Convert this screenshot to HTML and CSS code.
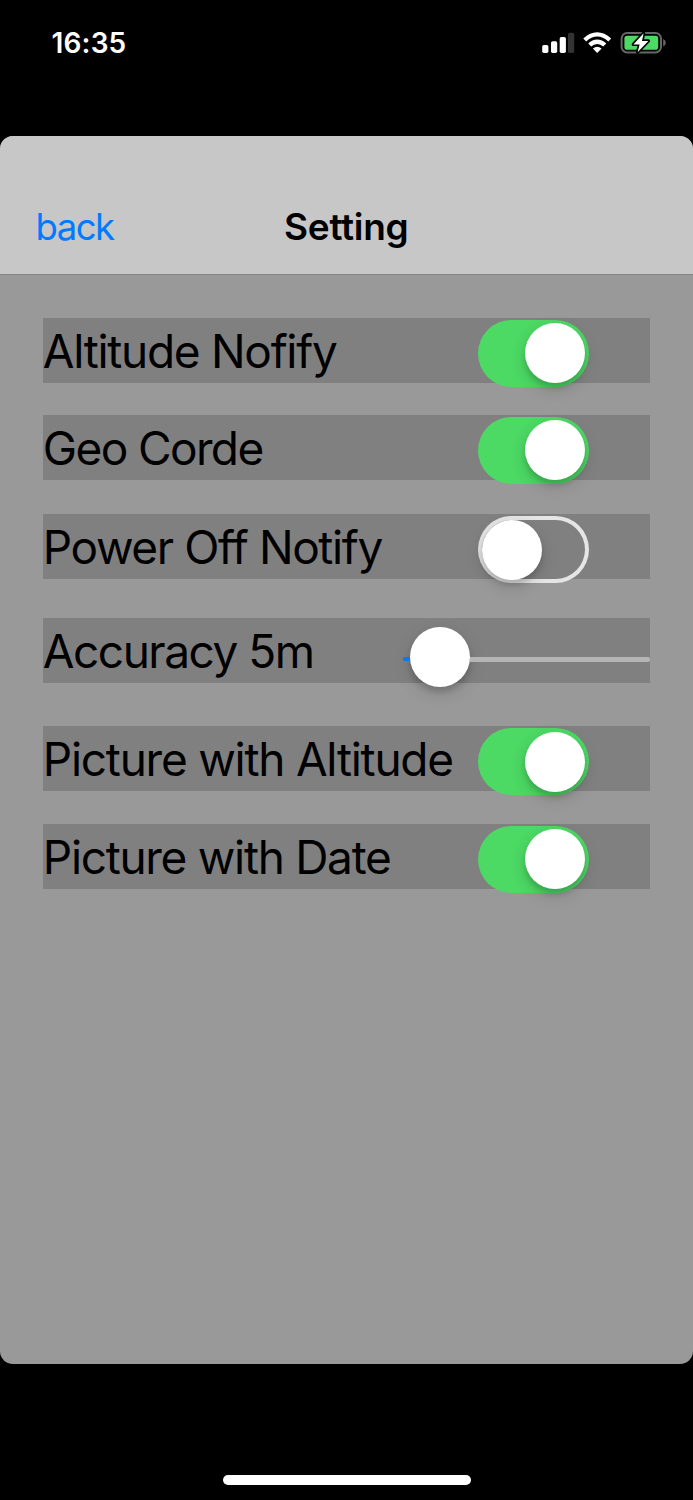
FILE: index.html
```html
<!DOCTYPE html>
<html lang="en">
<head>
<meta charset="utf-8">
<title>Setting</title>
<link rel="stylesheet" href="styles.css">
</head>
<body>
<div class="screen">
  <header class="status">
    <span class="time">16:35</span>
    <svg class="indicators" width="128" height="28" viewBox="540 29 128 28" aria-hidden="true">
      <g fill="#fff">
        <rect x="542.2" y="45" width="6.2" height="8" rx="1.7"/>
        <rect x="551" y="41.2" width="6.2" height="11.8" rx="1.7"/>
        <rect x="559.7" y="37" width="6.2" height="16" rx="1.7"/>
        <rect x="568" y="32.8" width="6.2" height="20.2" rx="1.7" fill="#333"/>
      </g>
      <path d="M583.3 38.5Q590 32.2 597.2 32.2T611.2 38.5L608.3 41.5Q603 36.5 597.2 36.5T586.2 41.5ZM588.2 43.6Q592.2 39.6 597.2 39.6T606.3 43.6L603.2 46.6Q600.5 44 597.2 44T591.2 46.6ZM592.9 48.4Q597.2 44.9 601.6 48.4L597.2 53Z" fill="#fff"/>
      <rect x="621.6" y="33" width="39.4" height="19.4" rx="5.5" fill="none" stroke="#666" stroke-width="2"/>
      <path d="M663.2 39Q665.8 40 665.8 42.7T663.2 46.4Z" fill="#666"/>
      <rect x="624.4" y="35.7" width="33.8" height="14" rx="2.8" fill="#4cd964"/>
      <path d="M643.6 33.3L633.4 44.4H639.6L637.6 52.2L648.4 40.9H642Z" fill="#fff" stroke="#000" stroke-width="3.4" stroke-linejoin="round" paint-order="stroke"/>
    </svg>
  </header>
  <main class="sheet">
    <nav class="navbar">
      <a class="back">back</a>
      <h1 class="title">Setting</h1>
    </nav>
    <section class="settings">
      <div class="row"><span class="label altitude">Altitude Nofify</span><span class="switch on"><i class="knob"></i></span></div>
      <div class="row geo-row"><span class="label geo">Geo Corde</span><span class="switch on"><i class="knob"></i></span></div>
      <div class="row power-row"><span class="label power">Power Off Notify</span><span class="switch"><i class="knob"></i></span></div>
      <div class="row accuracy-row"><span class="label accuracy">Accuracy 5m</span><span class="slider"><i class="fill"></i><i class="knob"></i><i class="track"></i></span></div>
      <div class="row picture-row"><span class="label picture">Picture with Altitude</span><span class="switch on"><i class="knob"></i></span></div>
      <div class="row date-row"><span class="label date">Picture with Date</span><span class="switch on"><i class="knob"></i></span></div>
    </section>
  </main>
  <footer class="home"><span class="home-bar"></span></footer>
</div>
</body>
</html>
```
FILE: styles.css
```css
* { box-sizing: border-box; }
body { margin: 0; background: #000; color: #000; font-family: Inter, Roboto, sans-serif; }
.screen { width: 693px; height: 1500px; display: flex; flex-direction: column; background: #000; }
.status { height: 135.5px; padding: 29px 25px 0 51.5px; display: flex; justify-content: space-between; align-items: flex-start; }
.time { color: #fff; font-size: 28px; font-weight: 600; line-height: 28px; letter-spacing: .15px; }
.indicators { display: block; }
.sheet { height: 1228.9px; border-radius: 13px; background: #999; overflow: hidden; }
.navbar { height: 139px; padding: 67px 36px 0 35.5px; display: grid; grid-template-columns: 1fr auto 1fr; align-items: start; background: #c7c7c7; border-bottom: 1px solid #858585; }
.back { color: #007aff; font-size: 36.5px; line-height: 48px; letter-spacing: -1.5px; }
.title { margin: 0; font-size: 37px; font-weight: 600; line-height: 48px; letter-spacing: -.3px; }
.settings { padding: 43.1px 43.2px 0; }
.row { height: 65px; display: flex; justify-content: space-between; align-items: flex-start; background: #808080; }
.geo-row { margin-top: 32.1px; }
.power-row { margin-top: 34.8px; }
.accuracy-row { margin-top: 39px; }
.picture-row { margin-top: 43px; }
.date-row { margin-top: 32.3px; }
.label { margin-left: -.4px; font-size: 46px; line-height: 67px; white-space: nowrap; }
.altitude { letter-spacing: -1.3px; }
.geo { letter-spacing: -1.62px; }
.power { letter-spacing: -1.4px; font-variant-ligatures: none; font-feature-settings: "calt" 0; }
.accuracy { letter-spacing: -1.48px; }
.picture { letter-spacing: -1.25px; }
.date { letter-spacing: -1.3px; }
.switch { width: 110.5px; height: 67px; margin: 2px 61px 0 0; padding: 3.5px; display: flex; flex: none; border-radius: 34px; box-shadow: inset 0 0 0 4px #e5e5e5; }
.switch.on { justify-content: flex-end; background: #4cd964; box-shadow: none; }
.knob { width: 60px; height: 60px; flex: none; border-radius: 50%; background: #fff; box-shadow: 0 6px 16px rgba(0,0,0,.16), 0 5px 5px rgba(0,0,0,.12); }
.slider { width: 247px; height: 60px; margin-top: 8.5px; display: flex; align-items: center; }
.fill { position: relative; z-index: 1; width: 7px; height: 4px; margin-top: 5px; border-radius: 2px 0 0 2px; background: #007aff; }
.track { height: 4.5px; flex: 1; margin-top: 5px; border-radius: 0 2px 2px 0; background: #b5b5b5; }
.home { flex: 1; display: flex; justify-content: center; align-items: flex-end; padding-bottom: 15px; }
.home-bar { width: 248px; height: 10px; border-radius: 5px; background: #fff; }
```
